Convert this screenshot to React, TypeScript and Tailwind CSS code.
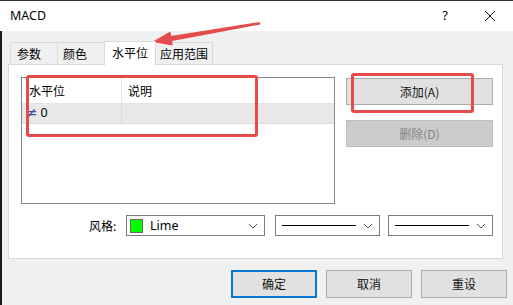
const cjk = "font-['Microsoft_YaHei','Noto_Sans_CJK_SC',sans-serif]";

function Chevron() {
  return (
    <svg width="10" height="6" viewBox="0 0 10 6" className="text-[#555]">
      <path d="M1 1 L5 5 L9 1" fill="none" stroke="currentColor" strokeWidth="1" />
    </svg>
  );
}

function Combo({ width, children }: { width: string; children: React.ReactNode }) {
  return (
    <div className={`${width} h-[21px] flex items-center border border-[#7a7a7a] bg-white pl-[3px] pr-[6px]`}>
      <div className="flex-1 flex items-center">{children}</div>
      <Chevron />
    </div>
  );
}

function DlgButton({ label, primary }: { label: string; primary?: boolean }) {
  return (
    <div
      className={`w-[86px] h-[28px] flex items-center justify-center bg-[#e1e1e1] text-[12px] text-[#111] ${
        primary ? "border-2 border-[#0078d7]" : "border border-[#adadad]"
      }`}
    >
      {label}
    </div>
  );
}

const tabs = [
  { label: "参数", cls: "w-[48px] pl-[6px] h-[22px] bg-[#f0f0f0]" },
  { label: "颜色", cls: "w-[48px] pl-[5px] h-[22px] bg-[#f0f0f0] -ml-px" },
  { label: "水平位", cls: "w-[52px] pl-[7px] h-[24px] pb-[2px] bg-white -ml-px -mb-px relative z-10" },
  { label: "应用范围", cls: "w-[58px] pl-[4px] h-[22px] bg-[#f0f0f0] -ml-px" },
];

export default function App() {
  return (
    <div className={`relative w-[513px] h-[305px] overflow-hidden bg-[#f0f0f0] flex flex-col ${cjk}`}>
      {/* title bar */}
      <div className="h-[31px] bg-white flex items-center pl-[10px] border-t border-[#333]">
        <span className="font-['Noto_Sans',sans-serif] text-[12.5px] text-black">MACD</span>
        <span className="ml-auto font-['Noto_Sans',sans-serif] text-[13px] text-black">?</span>
        <svg width="12" height="12" viewBox="0 0 12 12" className="ml-[36px] mr-[17px]">
          <path d="M1 1 L11 11 M11 1 L1 11" stroke="#111" strokeWidth="1" />
        </svg>
      </div>

      {/* body */}
      <div className="flex-1 flex flex-col border-l-2 border-[#1c1c1c] pl-[6px]">
        {/* tabs */}
        <div className="mt-[9px] h-[24px] flex items-end pl-[2px] text-[12px] text-black">
          {tabs.map((t) => (
            <div
              key={t.label}
              className={`flex items-center border-t border-l border-r border-[#d9d9d9] ${t.cls}`}
            >
              {t.label}
            </div>
          ))}
        </div>

        {/* panel */}
        <div className="w-[495px] h-[195px] bg-white border border-[#d9d9d9] pt-[12px] pl-[12px] flex flex-col">
          <div className="flex">
            <div className="w-[314px] h-[127px] border border-[#828790] flex flex-col text-[12px] text-black">
              <div className="h-[26px] flex border-b border-[#e5e5e5]">
                <div className="w-[100px] pl-[7px] flex items-center border-r border-[#e5e5e5]">水平位</div>
                <div className="flex-1 pl-[6px] flex items-center">说明</div>
              </div>
              <div className="h-[20px] flex bg-[#e8e8e8] border-b border-[#dadada]">
                <div className="w-[100px] pl-[3px] flex items-center border-r border-[#d8d8d8]">
                  <span className="text-[#3a4f9a] font-['DejaVu_Sans',sans-serif] text-[15px] leading-none">≠</span>
                  <span className="ml-[3px] font-['Noto_Sans',sans-serif] text-[12.5px]">0</span>
                </div>
                <div className="flex-1" />
              </div>
            </div>
            <div className="ml-[11px] mt-[1px] flex flex-col gap-[15px] text-[12px]">
              <div className="w-[147px] h-[27px] flex items-center justify-center bg-[#e1e1e1] border border-[#adadad] text-[#111]">
                添加(A)
              </div>
              <div className="w-[147px] h-[27px] flex items-center justify-center bg-[#cccccc] border border-[#bfbfbf] text-[#838383]">
                删除(D)
              </div>
            </div>
          </div>

          {/* style row */}
          <div className="mt-[11px] flex items-center text-[12px] text-black">
            <span className="ml-[68px] w-[30px]">风格:</span>
            <div className="ml-[7px]">
              <Combo width="w-[139px]">
                <span className="w-[13px] h-[14px] bg-[#00ff00] border border-[#666]" />
                <span className="ml-[7px] pt-[2px] font-['Noto_Sans',sans-serif] text-[12.5px]">Lime</span>
              </Combo>
            </div>
            <div className="ml-[10px]">
              <Combo width="w-[105px]">
                <span className="ml-[3px] w-[74px] h-px bg-black" />
              </Combo>
            </div>
            <div className="ml-[8px]">
              <Combo width="w-[105px]">
                <span className="ml-[3px] w-[74px] h-px bg-black" />
              </Combo>
            </div>
          </div>
        </div>

        {/* bottom buttons */}
        <div className="mt-[11px] flex pl-[223px] gap-[9px]">
          <DlgButton label="确定" primary />
          <DlgButton label="取消" />
          <DlgButton label="重设" />
        </div>
      </div>

      {/* red annotations */}
      <div className="absolute left-[26px] top-[75px] w-[232px] h-[62px] border-[3px] border-[#e54b4b] rounded-[3px]" />
      <div className="absolute left-[351px] top-[73px] w-[123px] h-[40px] border-[3px] border-[#e54b4b] rounded-[3px]" />
      <svg className="absolute left-0 top-0" width="513" height="305" viewBox="0 0 513 305">
        <polygon
          points="152,42 170.4,31.6 171.2,36 259.8,22 260.2,24.5 172,41 172.8,45.4"
          fill="#e54b4b"
        />
      </svg>
    </div>
  );
}
